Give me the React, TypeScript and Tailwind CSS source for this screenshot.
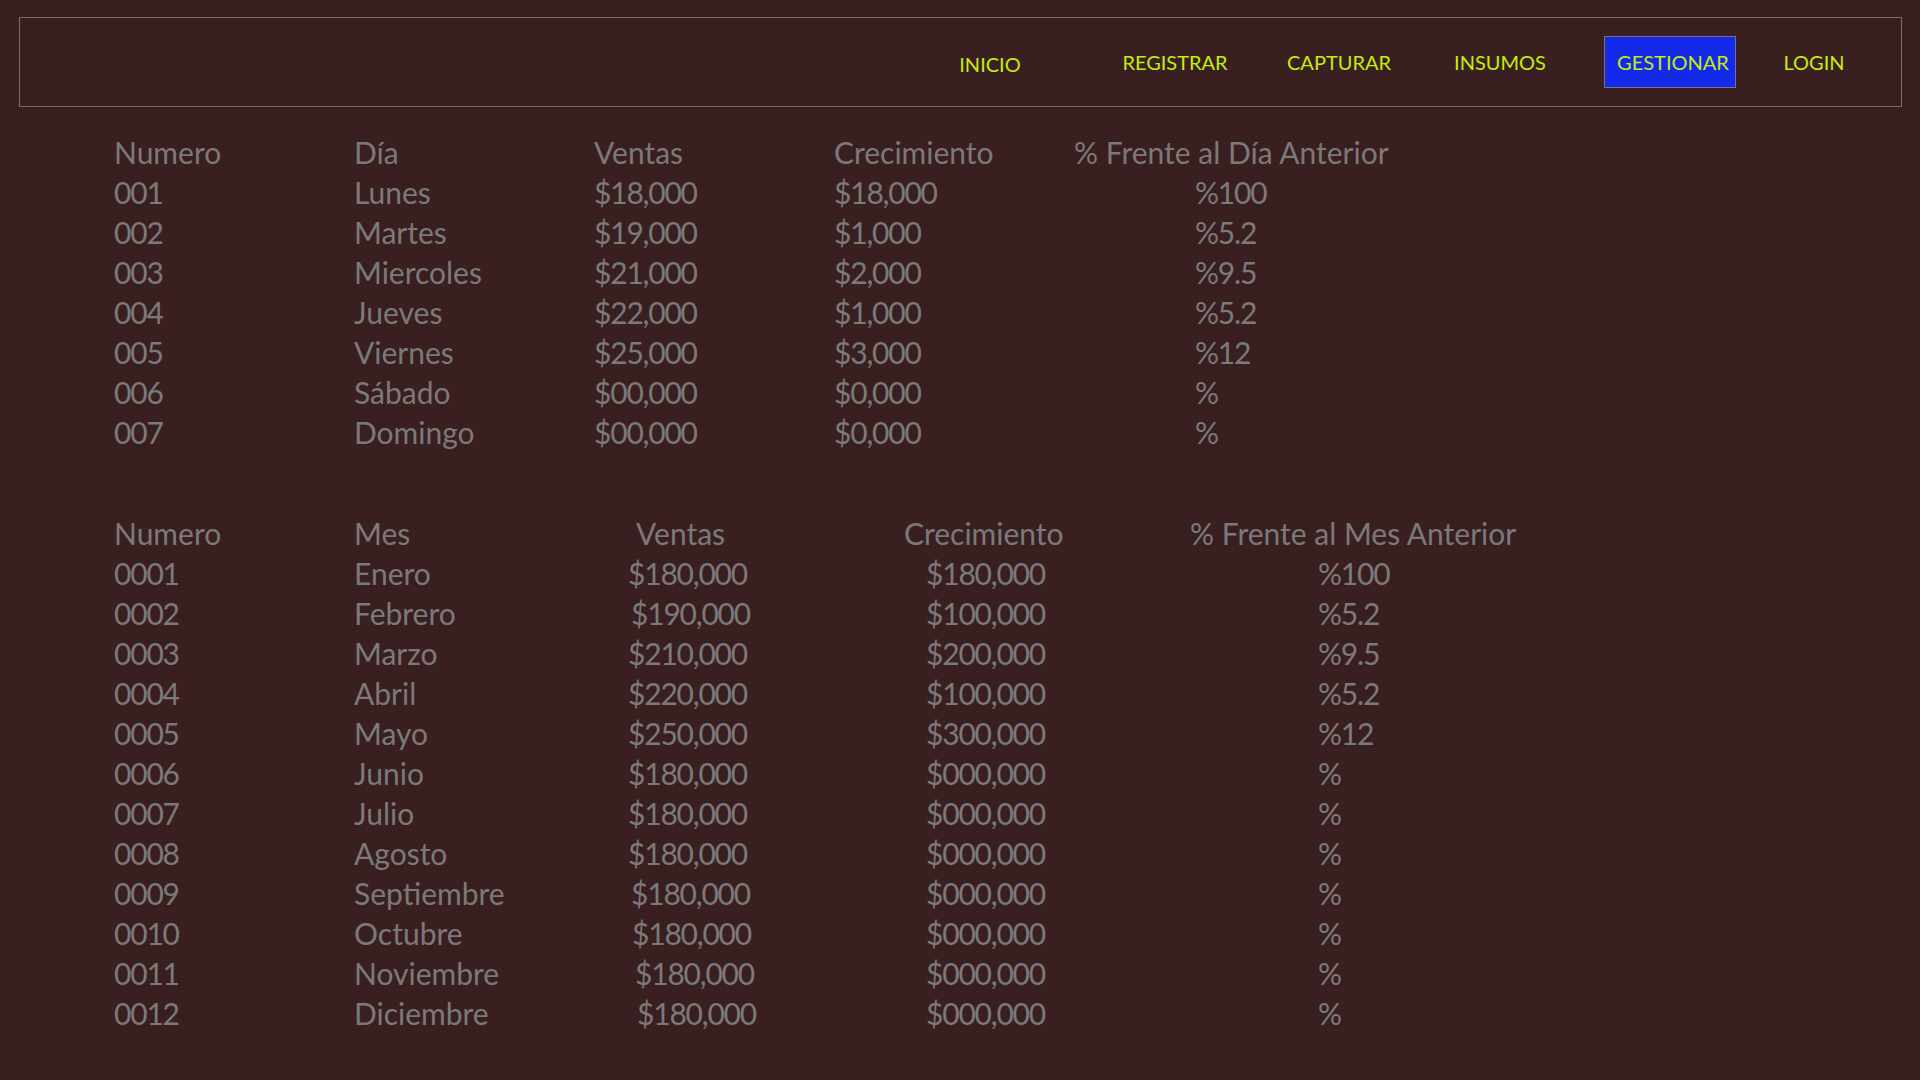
import React from 'react';

const font = { fontFamily: 'Lato, "Open Sans", sans-serif' };

type DayRow = { num: string; day: string; sales: string; growth: string; pct: string };
type MonthRow = { num: string; month: string; sales: string; growth: string; pct: string; shift: string };

const days: DayRow[] = [
  { num: '001', day: 'Lunes', sales: '$18,000', growth: '$18,000', pct: '%100' },
  { num: '002', day: 'Martes', sales: '$19,000', growth: '$1,000', pct: '%5.2' },
  { num: '003', day: 'Miercoles', sales: '$21,000', growth: '$2,000', pct: '%9.5' },
  { num: '004', day: 'Jueves', sales: '$22,000', growth: '$1,000', pct: '%5.2' },
  { num: '005', day: 'Viernes', sales: '$25,000', growth: '$3,000', pct: '%12' },
  { num: '006', day: 'Sábado', sales: '$00,000', growth: '$0,000', pct: '%' },
  { num: '007', day: 'Domingo', sales: '$00,000', growth: '$0,000', pct: '%' },
];

const months: MonthRow[] = [
  { num: '0001', month: 'Enero', sales: '$180,000', growth: '$180,000', pct: '%100', shift: 'pl-0' },
  { num: '0002', month: 'Febrero', sales: '$190,000', growth: '$100,000', pct: '%5.2', shift: 'pl-[3px]' },
  { num: '0003', month: 'Marzo', sales: '$210,000', growth: '$200,000', pct: '%9.5', shift: 'pl-0' },
  { num: '0004', month: 'Abril', sales: '$220,000', growth: '$100,000', pct: '%5.2', shift: 'pl-0' },
  { num: '0005', month: 'Mayo', sales: '$250,000', growth: '$300,000', pct: '%12', shift: 'pl-0' },
  { num: '0006', month: 'Junio', sales: '$180,000', growth: '$000,000', pct: '%', shift: 'pl-0' },
  { num: '0007', month: 'Julio', sales: '$180,000', growth: '$000,000', pct: '%', shift: 'pl-0' },
  { num: '0008', month: 'Agosto', sales: '$180,000', growth: '$000,000', pct: '%', shift: 'pl-0' },
  { num: '0009', month: 'Septiembre', sales: '$180,000', growth: '$000,000', pct: '%', shift: 'pl-[3px]' },
  { num: '0010', month: 'Octubre', sales: '$180,000', growth: '$000,000', pct: '%', shift: 'pl-[4px]' },
  { num: '0011', month: 'Noviembre', sales: '$180,000', growth: '$000,000', pct: '%', shift: 'pl-[7px]' },
  { num: '0012', month: 'Diciembre', sales: '$180,000', growth: '$000,000', pct: '%', shift: 'pl-[9px]' },
];

// Segoe-style digits are narrower than Lato's, so numbers get pulled in a bit
const num = 'tracking-[-1.2px]';

function NavBar() {
  const link = 'text-[20px] text-[#c4ec0c] text-center whitespace-nowrap';
  return (
    <nav className="mx-[18px] mt-[17px] ml-[19px] h-[90px] border border-[#707070] flex items-center justify-end pr-[37px]">
      <a className={`${link} w-[120px] mt-[3px]`}>INICIO</a>
      <a className={`${link} w-[130px] ml-[60px]`}>REGISTRAR</a>
      <a className={`${link} w-[130px] ml-[34px]`}>CAPTURAR</a>
      <a className={`${link} w-[120px] ml-[36px]`}>INSUMOS</a>
      <a className={`${link} ml-[44px] w-[132px] h-[52px] flex items-center justify-center pl-[6px] bg-[#1429ea] border border-[#777777]`}>
        GESTIONAR
      </a>
      <a className={`${link} w-[100px] ml-[28px]`}>LOGIN</a>
    </nav>
  );
}

function DaysTable() {
  return (
    <div className="grid grid-cols-[240px_240px_240px_240px_auto] text-[30px] leading-[40px] text-[#7a7a7a]">
      <div>Numero</div>
      <div>Día</div>
      <div>Ventas</div>
      <div>Crecimiento</div>
      <div>% Frente al Día Anterior</div>
      {days.map((d) => (
        <React.Fragment key={d.num}>
          <div className={num}>{d.num}</div>
          <div>{d.day}</div>
          <div className={num}>{d.sales}</div>
          <div className={num}>{d.growth}</div>
          <div className={`pl-[121px] ${num}`}>{d.pct}</div>
        </React.Fragment>
      ))}
    </div>
  );
}

function MonthsTable() {
  return (
    <div className="grid grid-cols-[240px_274px_276px_286px_auto] text-[30px] leading-[40px] text-[#7a7a7a]">
      <div>Numero</div>
      <div>Mes</div>
      <div className="pl-[8px]">Ventas</div>
      <div>Crecimiento</div>
      <div>% Frente al Mes Anterior</div>
      {months.map((m) => (
        <React.Fragment key={m.num}>
          <div className={num}>{m.num}</div>
          <div>{m.month}</div>
          <div className={`${m.shift} ${num}`}>{m.sales}</div>
          <div className={`pl-[22px] ${num}`}>{m.growth}</div>
          <div className={`pl-[128px] ${num}`}>{m.pct}</div>
        </React.Fragment>
      ))}
    </div>
  );
}

export default function App() {
  return (
    <div className="min-h-screen w-full bg-[#3a1f20] overflow-hidden" style={font}>
      <NavBar />
      <main className="pl-[114px] pt-[25px] flex flex-col gap-[61px]">
        <DaysTable />
        <MonthsTable />
      </main>
    </div>
  );
}
